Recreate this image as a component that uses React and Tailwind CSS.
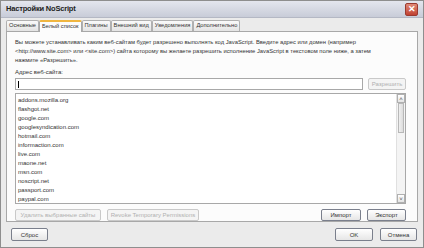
import React from 'react'

const sites = [
	'addons.mozilla.org',
	'flashgot.net',
	'google.com',
	'googlesyndication.com',
	'hotmail.com',
	'informaction.com',
	'live.com',
	'maone.net',
	'msn.com',
	'noscript.net',
	'passport.com',
	'paypal.com',
]

const tabs = ['Основные', 'Белый список', 'Плагины', 'Внешний вид', 'Уведомления', 'Дополнительно']

function Btn({ children, className = '', disabled }) {
	return (
		<div
			className={`h-[12px] flex items-center justify-center whitespace-nowrap rounded-[2px] border text-[6px] leading-none ${
				disabled ? 'border-[#c9c9c9] text-[#b0b0b0] bg-[#f4f4f4]' : 'border-[#7a7f8c] text-[#333] bg-gradient-to-b from-white to-[#e6e6e6]'
			} ${className}`}
		>
			{children}
		</div>
	)
}

export default function App() {
	return (
		<div className="w-[424px] h-[248px] flex flex-col bg-[#ebebeb] border border-[#8e8e8e] font-['Liberation_Sans',Arial,sans-serif] text-[#333] overflow-hidden">
			{/* title bar */}
			<div className="h-[17px] shrink-0 flex items-center px-[5px] bg-gradient-to-b from-[#e4e6ee] to-[#c8ccd8] border-b border-[#b4b8c4]">
				<span className="text-[7.5px] font-bold text-[#222] tracking-tight">Настройки NoScript</span>
				<div className="ml-auto w-[13px] h-[13px] rounded-[2px] bg-gradient-to-b from-[#e08a78] to-[#c04030] border border-[#9a3a30] flex items-center justify-center text-white text-[9px] leading-none font-bold">
					✕
				</div>
			</div>

			<div className="flex-1 flex flex-col px-[5px] pt-[1px]">
				{/* tabs */}
				<div className="h-[12px] flex items-end">
					{tabs.map((t, i) => (
						<div
							key={t}
							className={`px-[2px] text-[5.7px] leading-none whitespace-nowrap flex items-center border border-b-0 rounded-t-[2px] ${
								i === 1
									? 'h-[12px] bg-[#fcfcfc] border-[#a8a8a8] border-t-2 border-t-[#f0b640] -mb-[1px] relative z-10'
									: 'h-[11px] bg-gradient-to-b from-[#fafafa] to-[#e4e4e4] border-[#b0b0b0]'
							}`}
						>
							{t}
						</div>
					))}
				</div>

				{/* panel */}
				<div className="h-[191px] bg-[#fcfcfc] border border-[#a8a8a8] flex flex-col pl-[8px] pr-[11px] pt-[6px]">
					<p className="text-[5.8px] leading-[9px] text-[#333] whitespace-nowrap">
						Вы можете устанавливать каким веб-сайтам будет разрешено выполнять код JavaScript. Введите адрес или домен (например
						<br />
						&lt;http://www.site.com&gt; или &lt;site.com&gt;) сайта которому вы желаете разрешить исполнение JavaScript в текстовом поле ниже, а затем
						<br />
						нажмите «Разрешить».
					</p>
					<div className="mt-[3px] text-[6px] leading-[9px]">Адрес веб-сайта:</div>
					<div className="mt-[1px] flex gap-[5px] h-[12px]">
						<div className="flex-1 border border-[#a8a8a8] bg-white flex items-center pl-[2px]">
							<div className="w-px h-[7px] bg-black" />
						</div>
						<Btn disabled className="w-[38px]">Разрешить</Btn>
					</div>
					<div className="mt-[3px] h-[112px] border border-[#a8a8a8] bg-white flex overflow-hidden">
						<div className="flex-1 pl-[2px] pt-[2px]">
							{sites.map((s) => (
								<div key={s} className="text-[6px] leading-[9px] text-[#333]">{s}</div>
							))}
						</div>
						<div className="w-[9px] border-l border-[#e0e0e0] bg-[#f4f4f4] flex flex-col">
							<div className="h-[9px] border border-[#b0b0b0] bg-gradient-to-b from-white to-[#e4e4e4] text-[6px] leading-none flex items-center justify-center text-[#444]">˄</div>
							<div className="h-[30px] mx-[1px] border border-[#b8b8b8] bg-gradient-to-r from-[#f0f0f0] to-[#dcdcdc]" />
							<div className="flex-1" />
							<div className="h-[9px] border border-[#b0b0b0] bg-gradient-to-b from-white to-[#e4e4e4] text-[6px] leading-none flex items-center justify-center text-[#444]">˅</div>
						</div>
					</div>
					<div className="mt-[5px] flex gap-[6px]">
						<Btn disabled className="w-[86px]">Удалить выбранные сайты</Btn>
						<Btn disabled className="w-[92px]">Revoke Temporary Permissions</Btn>
						<Btn className="w-[40px] ml-auto">Импорт</Btn>
						<Btn className="w-[39px]">Экспорт</Btn>
					</div>
				</div>

				{/* bottom buttons */}
				<div className="mt-[6px] flex gap-[7px] pl-[5px] pr-[1px]">
					<Btn className="w-[37px] h-[13px]">Сброс</Btn>
					<Btn className="w-[38px] h-[13px] ml-auto">OK</Btn>
					<Btn className="w-[37px] h-[13px]">Отмена</Btn>
				</div>
			</div>
		</div>
	)
}
